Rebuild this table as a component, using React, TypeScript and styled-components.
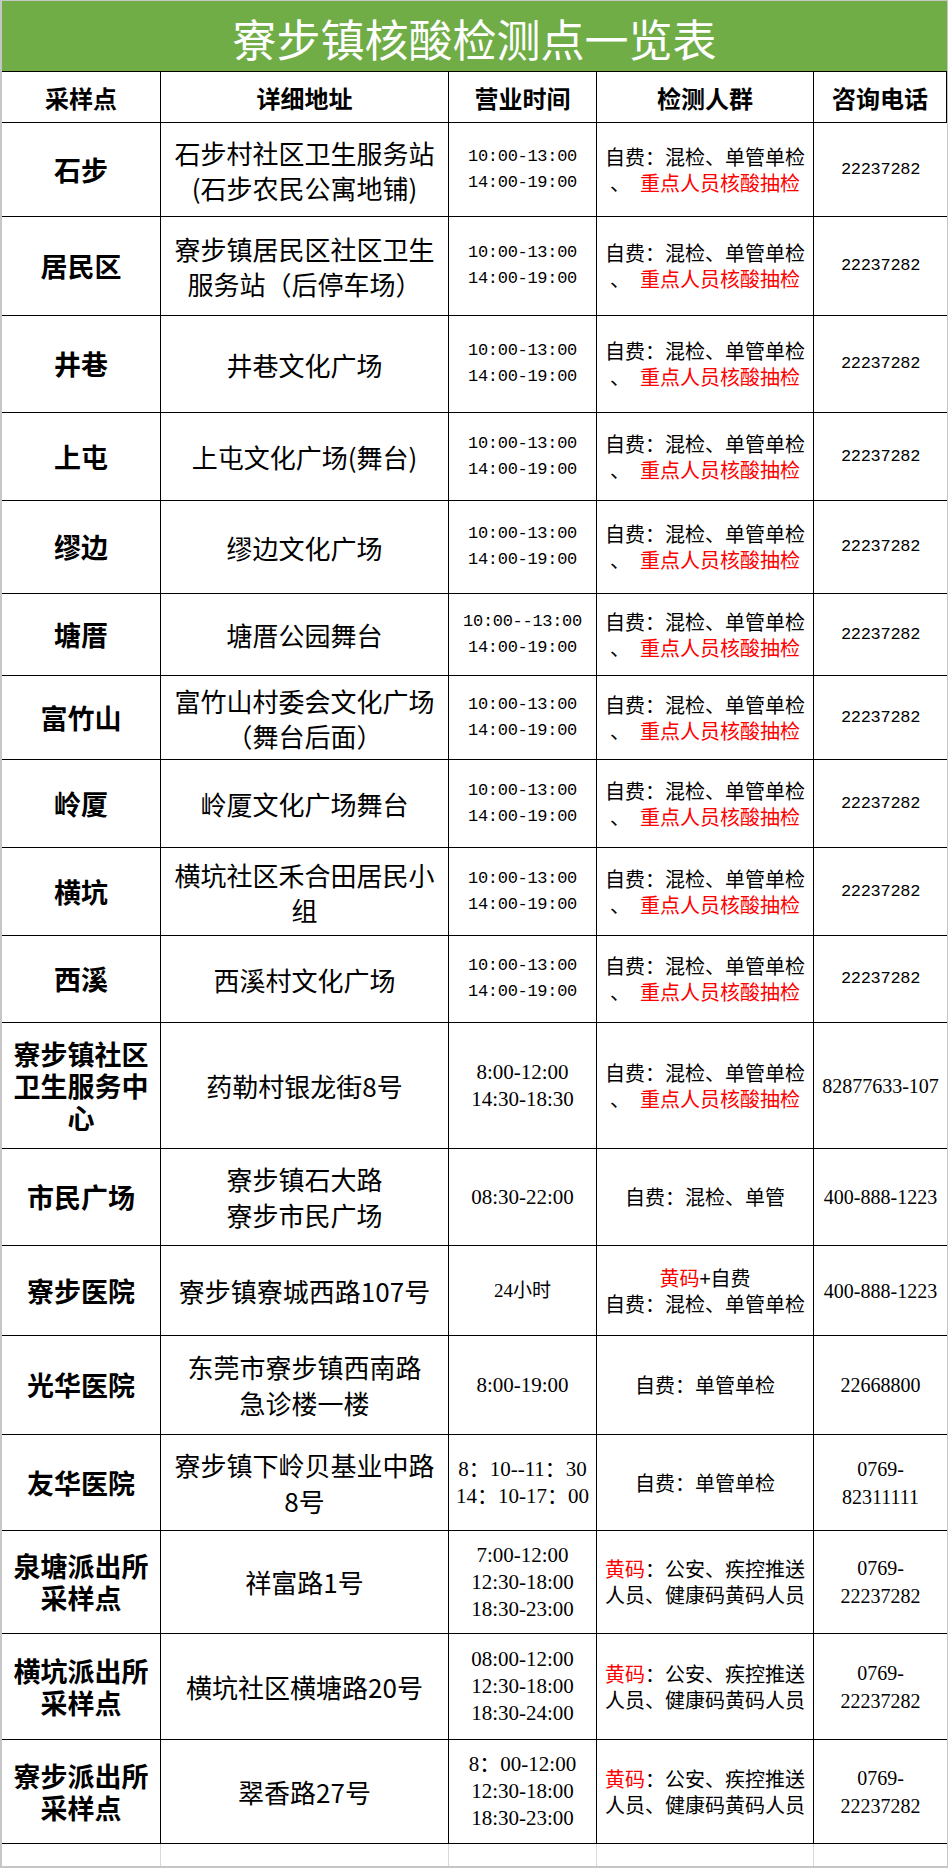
import React from 'react';
import styled, { createGlobalStyle } from 'styled-components';

const GlobalStyle = createGlobalStyle`
  html, body {
    margin: 0;
    padding: 0;
    background: #fff;
  }
  body {
    font-family: "Noto Sans CJK SC", "Noto Sans", sans-serif;
  }
`;

const COLS = '159px 288px 148px 217px 133px';
const CJK = '"Noto Sans CJK SC", "Noto Sans", sans-serif';
const MONO = '"Liberation Mono", "Noto Sans CJK SC", monospace';
const SERIF = '"Liberation Serif", "Noto Sans CJK SC", serif';

const Sheet = styled.div`
  width: 948px;
  height: 1868px;
  box-sizing: border-box;
  border-style: solid;
  border-color: #c6c6c6;
  border-width: 1px 1px 2px 2px;
  display: flex;
  flex-direction: column;
  overflow: hidden;
`;

const TitleBar = styled.div`
  height: 70px;
  flex: none;
  background: #70ad47;
  color: #fff;
  font-family: ${CJK};
  font-size: 44px;
  font-weight: 400;
  display: flex;
  align-items: center;
  justify-content: center;
  padding-top: 4px;
  box-sizing: border-box;
`;

const Row = styled.div<{ $h: number }>`
  display: grid;
  grid-template-columns: ${COLS};
  height: ${(p) => p.$h}px;
  flex: none;
`;

const HeaderRow = styled(Row)`
  box-sizing: border-box;
  border-top: 1px solid #000;
`;

const Cell = styled.div`
  box-sizing: border-box;
  border-right: 1px solid #000;
  border-bottom: 1px solid #000;
  display: flex;
  flex-direction: column;
  align-items: center;
  justify-content: center;
  text-align: center;
  color: #000;
  overflow: hidden;
`;

const HeadCell = styled(Cell)`
  font-family: ${CJK};
  font-size: 24px;
  font-weight: 700;
`;

const PlaceCell = styled(Cell)`
  font-family: ${CJK};
  font-size: 27px;
  font-weight: 700;
  line-height: 32px;
  padding: 0 4px;
`;

const AddressCell = styled(Cell)<{ $narrow?: boolean }>`
  font-family: ${CJK};
  font-size: 26px;
  line-height: ${(p) => (p.$narrow ? 36 : 35)}px;
`;

const HoursCell = styled(Cell)<{ $narrow?: boolean; $small?: boolean }>`
  font-family: ${(p) => (p.$narrow ? SERIF : MONO)};
  font-size: ${(p) => (p.$small ? 19 : p.$narrow ? 21 : 17)}px;
  letter-spacing: ${(p) => (p.$narrow ? 0 : -0.3)}px;
  line-height: ${(p) => (p.$narrow ? 27 : 26)}px;
`;

const GroupCell = styled(Cell)`
  font-family: ${CJK};
  font-size: 20px;
  line-height: 26px;
`;

const PhoneCell = styled(Cell)<{ $narrow?: boolean }>`
  font-family: ${(p) => (p.$narrow ? SERIF : MONO)};
  font-size: ${(p) => (p.$narrow ? 20 : 17)}px;
  letter-spacing: ${(p) => (p.$narrow ? 0 : -0.3)}px;
  line-height: 28px;
  border-right: none;
`;

const BlankRow = styled(Row)``;

const BlankCell = styled.div`
  border-right: 1px solid #d9d9d9;
  &:last-child {
    border-right: none;
  }
`;

const Line = styled.span`
  display: block;
  white-space: nowrap;
`;

const Red = styled.span`
  color: #ff0000;
`;

const Gap = styled.span`
  display: inline-block;
  width: 10px;
`;

type Groups = 'mixed' | 'civic' | 'hospital' | 'single' | 'yellow';

type Site = {
  h: number;
  place: string;
  address: string[];
  hours: string[];
  groups: Groups;
  phone: string[];
  narrow?: boolean;
  smallHours?: boolean;
};

const DAY = ['10:00-13:00', '14:00-19:00'];

const sites: Site[] = [
  { h: 94, place: '石步', address: ['石步村社区卫生服务站', '(石步农民公寓地铺)'], hours: DAY, groups: 'mixed', phone: ['22237282'] },
  { h: 99, place: '居民区', address: ['寮步镇居民区社区卫生', '服务站（后停车场）'], hours: DAY, groups: 'mixed', phone: ['22237282'] },
  { h: 97, place: '井巷', address: ['井巷文化广场'], hours: DAY, groups: 'mixed', phone: ['22237282'] },
  { h: 88, place: '上屯', address: ['上屯文化广场(舞台)'], hours: DAY, groups: 'mixed', phone: ['22237282'] },
  { h: 93, place: '缪边', address: ['缪边文化广场'], hours: DAY, groups: 'mixed', phone: ['22237282'] },
  { h: 82, place: '塘厝', address: ['塘厝公园舞台'], hours: ['10:00--13:00', '14:00-19:00'], groups: 'mixed', phone: ['22237282'] },
  { h: 84, place: '富竹山', address: ['富竹山村委会文化广场', '（舞台后面）'], hours: DAY, groups: 'mixed', phone: ['22237282'] },
  { h: 88, place: '岭厦', address: ['岭厦文化广场舞台'], hours: DAY, groups: 'mixed', phone: ['22237282'] },
  { h: 88, place: '横坑', address: ['横坑社区禾合田居民小', '组'], hours: DAY, groups: 'mixed', phone: ['22237282'] },
  { h: 87, place: '西溪', address: ['西溪村文化广场'], hours: DAY, groups: 'mixed', phone: ['22237282'] },
  { h: 126, place: '寮步镇社区卫生服务中心', address: ['药勒村银龙街8号'], hours: ['8:00-12:00', '14:30-18:30'], groups: 'mixed', phone: ['82877633-107'], narrow: true },
  { h: 97, place: '市民广场', address: ['寮步镇石大路', '寮步市民广场'], hours: ['08:30-22:00'], groups: 'civic', phone: ['400-888-1223'], narrow: true },
  { h: 90, place: '寮步医院', address: ['寮步镇寮城西路107号'], hours: ['24小时'], groups: 'hospital', phone: ['400-888-1223'], narrow: true, smallHours: true },
  { h: 99, place: '光华医院', address: ['东莞市寮步镇西南路', '急诊楼一楼'], hours: ['8:00-19:00'], groups: 'single', phone: ['22668800'], narrow: true },
  { h: 96, place: '友华医院', address: ['寮步镇下岭贝基业中路', '8号'], hours: ['8：10--11：30', '14：10-17：00'], groups: 'single', phone: ['0769-', '82311111'], narrow: true },
  { h: 103, place: '泉塘派出所采样点', address: ['祥富路1号'], hours: ['7:00-12:00', '12:30-18:00', '18:30-23:00'], groups: 'yellow', phone: ['0769-', '22237282'], narrow: true },
  { h: 106, place: '横坑派出所采样点', address: ['横坑社区横塘路20号'], hours: ['08:00-12:00', '12:30-18:00', '18:30-24:00'], groups: 'yellow', phone: ['0769-', '22237282'], narrow: true },
  { h: 104, place: '寮步派出所采样点', address: ['翠香路27号'], hours: ['8：00-12:00', '12:30-18:00', '18:30-23:00'], groups: 'yellow', phone: ['0769-', '22237282'], narrow: true },
];

const GroupText = ({ kind }: { kind: Groups }) => {
  switch (kind) {
    case 'mixed':
      return (
        <>
          <Line>自费：混检、单管单检</Line>
          <Line>
            、<Gap />
            <Red>重点人员核酸抽检</Red>
          </Line>
        </>
      );
    case 'civic':
      return <Line>自费：混检、单管</Line>;
    case 'hospital':
      return (
        <>
          <Line>
            <Red>黄码</Red>+自费
          </Line>
          <Line>自费：混检、单管单检</Line>
        </>
      );
    case 'single':
      return <Line>自费：单管单检</Line>;
    default:
      return (
        <>
          <Line>
            <Red>黄码</Red>：公安、疾控推送
          </Line>
          <Line>人员、健康码黄码人员</Line>
        </>
      );
  }
};

const headers = ['采样点', '详细地址', '营业时间', '检测人群', '咨询电话'];

const App = () => (
  <>
    <GlobalStyle />
    <Sheet>
      <TitleBar>寮步镇核酸检测点一览表</TitleBar>
      <HeaderRow $h={52}>
        {headers.map((h) => (
          <HeadCell key={h}>{h}</HeadCell>
        ))}
      </HeaderRow>
      {sites.map((s) => (
        <Row key={s.place} $h={s.h}>
          <PlaceCell>{s.place}</PlaceCell>
          <AddressCell $narrow={s.narrow}>
            {s.address.map((a) => (
              <Line key={a}>{a}</Line>
            ))}
          </AddressCell>
          <HoursCell $narrow={s.narrow} $small={s.smallHours}>
            {s.hours.map((t) => (
              <Line key={t}>{t}</Line>
            ))}
          </HoursCell>
          <GroupCell>
            <GroupText kind={s.groups} />
          </GroupCell>
          <PhoneCell $narrow={s.narrow}>
            {s.phone.map((p) => (
              <Line key={p}>{p}</Line>
            ))}
          </PhoneCell>
        </Row>
      ))}
      <BlankRow $h={22}>
        {headers.map((h) => (
          <BlankCell key={h} />
        ))}
      </BlankRow>
    </Sheet>
  </>
);

export default App;
